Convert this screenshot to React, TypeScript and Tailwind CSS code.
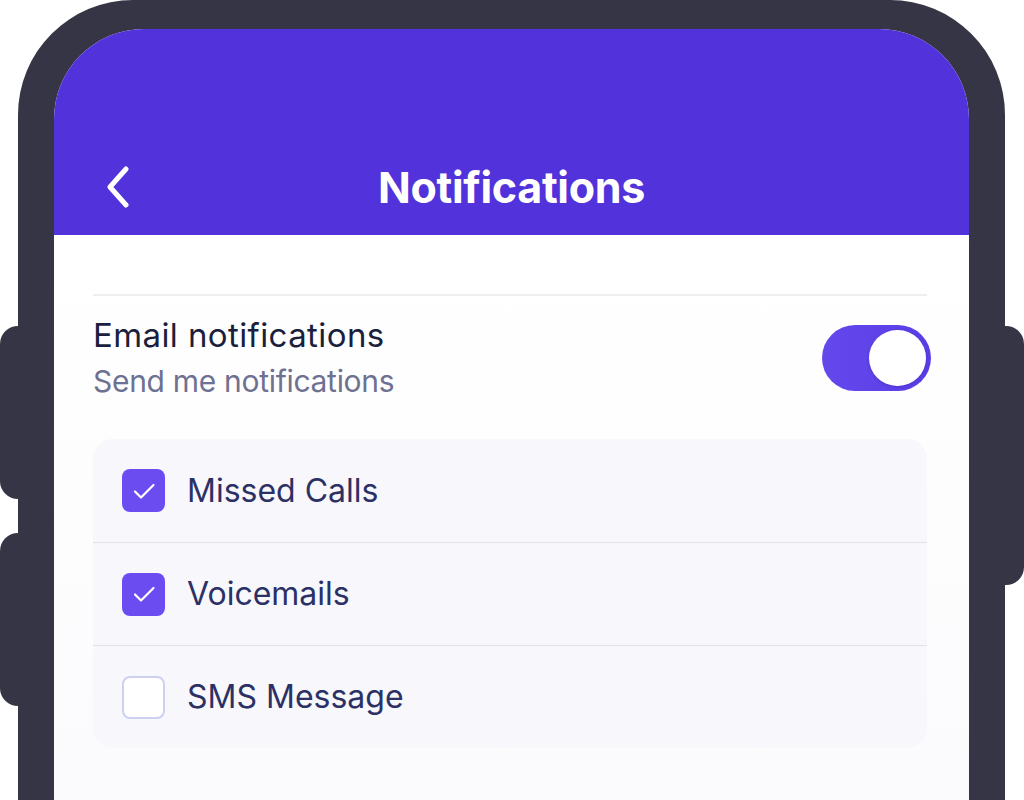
import { useState } from "react";

const items = [
  { label: "Missed Calls", on: true },
  { label: "Voicemails", on: true },
  { label: "SMS Message", on: false },
];

function Check({ on }: { on: boolean }) {
  if (!on) {
    return <div className="w-[43px] h-[43px] rounded-[8px] bg-white border-2 border-[#cdd0ee]" />;
  }
  return (
    <div className="w-[43px] h-[43px] rounded-[8px] bg-[#6a4cf0] flex items-center justify-center">
      <svg width="26" height="26" viewBox="0 0 26 26" fill="none">
        <path d="M4 13.5l6 6L22.5 7" stroke="white" strokeWidth="2.2" strokeLinecap="round" strokeLinejoin="round" />
      </svg>
    </div>
  );
}

export default function App() {
  const [email, setEmail] = useState(true);
  const [list, setList] = useState(items);

  return (
    <div className="w-[1024px] h-[800px] bg-white overflow-hidden flex" style={{ fontFamily: "Inter, 'Noto Sans', sans-serif" }}>
      {/* left side buttons */}
      <div className="w-[18px] shrink-0 flex flex-col gap-[34px] pt-[326px]">
        <div className="h-[173px] bg-[#363545] rounded-l-[18px]" />
        <div className="h-[173px] bg-[#363545] rounded-l-[18px]" />
      </div>

      {/* phone frame */}
      <div className="w-[987px] shrink-0 bg-[#363545] rounded-t-[115px] pt-[29px] px-[36px]">
        <div className="h-[771px] bg-white rounded-t-[90px] overflow-hidden flex flex-col">
          <div className="h-[206px] bg-[#5233db] flex flex-col justify-end pb-[18px]">
            <div className="relative h-[60px] flex items-center justify-center">
              <button className="absolute left-[52px] top-[9px]">
                <svg width="24" height="42" viewBox="0 0 24 42" fill="none">
                  <path d="M20 3L4 21l16 18" stroke="white" strokeWidth="5" strokeLinecap="round" strokeLinejoin="round" />
                </svg>
              </button>
              <h1 className="text-white text-[43px] leading-[60px] font-bold tracking-[-0.3px]">Notifications</h1>
            </div>
          </div>

          <div className="flex-1 pl-[39px] pr-[42px] bg-gradient-to-b from-white to-[#fbfbfd]">
            <div className="mt-[59px] border-t-2 border-[#efeff2]" />

            <div className="flex items-start justify-between pt-[19px]">
              <div>
                <div className="text-[33px] leading-[40px] tracking-[0.4px] text-[#1b1e3c]">Email notifications</div>
                <div className="text-[30px] leading-[40px] tracking-[-0.3px] mt-[6px] text-[#6e7191]">Send me notifications</div>
              </div>
              <button
                onClick={() => setEmail(!email)}
                className="mt-[10px] -mr-[4px] w-[109px] h-[66px] rounded-full bg-gradient-to-r from-[#6548ec] to-[#5a3de6] p-[5px] flex justify-end"
              >
                <span className="w-[57px] h-[56px] rounded-full bg-white shadow-[0_1px_3px_rgba(40,20,120,0.25)]" />
              </button>
            </div>

            <div className="mt-[38px] bg-[#f7f7fc] rounded-[20px]">
              {list.map((it, i) => (
                <div
                  key={it.label}
                  onClick={() => setList(list.map((x, j) => (j === i ? { ...x, on: !x.on } : x)))}
                  className={"h-[103px] flex items-center gap-[22px] pl-[29px] " + (i > 0 ? "border-t border-[#e2e3ea]" : "")}
                >
                  <Check on={it.on} />
                  <span className="text-[32px] text-[#2c3165]">{it.label}</span>
                </div>
              ))}
            </div>
          </div>
        </div>
      </div>

      {/* right side button */}
      <div className="w-[19px] shrink-0 pt-[326px]">
        <div className="h-[259px] bg-[#363545] rounded-r-[18px]" />
      </div>
    </div>
  );
}
